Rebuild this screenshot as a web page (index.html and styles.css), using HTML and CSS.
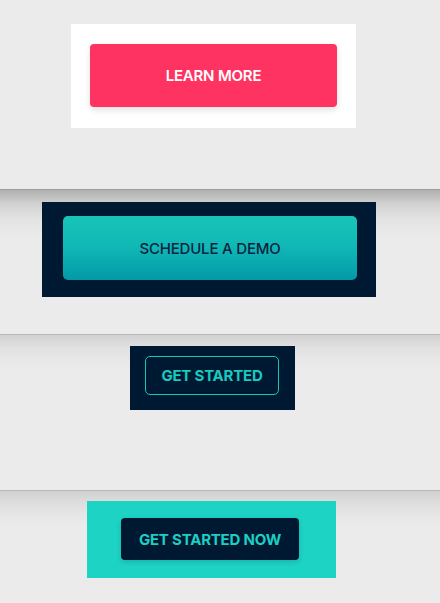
FILE: index.html
```html
<!DOCTYPE html>
<html>
<head>
<meta charset="utf-8">
<link rel="stylesheet" href="styles.css">
</head>
<body>
<section class="sec sec1">
  <div class="box box1"><a class="btn btn-learn">LEARN MORE</a></div>
</section>
<section class="sec sec2">
  <div class="box box2"><a class="btn btn-demo">SCHEDULE A DEMO</a></div>
</section>
<section class="sec sec3">
  <div class="box box3"><a class="btn btn-start">GET STARTED</a></div>
</section>
<section class="sec sec4">
  <div class="box box4"><a class="btn btn-now">GET STARTED NOW</a></div>
</section>
</body>
</html>
```
FILE: styles.css
```css
html, body { margin: 0; padding: 0; }
body {
  background: #ebebeb;
  font-family: "Inter", "Noto Sans", sans-serif;
  width: 440px;
  height: 603px;
  overflow: hidden;
}
.sec {
  display: flex;
  flex-direction: column;
  align-items: flex-start;
  box-sizing: border-box;
}
.sec1 { height: 189px; padding-top: 24px; background: #ebebeb; }
.sec2 {
  height: 145px;
  padding-top: 12px;
  border-top: 1px solid #9e9e9e;
  background: linear-gradient(to bottom, #b0b0b0 0px, #d2d2d2 14px, #e4e4e4 30px, #ebebeb 48px, #ebebeb 100%);
}
.sec3 {
  height: 156px;
  padding-top: 11px;
  border-top: 1px solid #b8b8b8;
  background: linear-gradient(to bottom, #d2d2d2 0px, #e2e2e2 14px, #ebebeb 34px, #ebebeb 100%);
}
.sec4 {
  height: 113px;
  padding-top: 10px;
  border-top: 1px solid #b8b8b8;
  background: linear-gradient(to bottom, #d0d0d0 0px, #e0e0e0 14px, #ebebeb 34px, #ebebeb 100%);
}
.box { display: flex; box-sizing: border-box; }
.box1 { margin-left: 71px; width: 285px; height: 104px; padding: 20px 19px 0; background: #fff; }
.box2 { margin-left: 42px; width: 334px; height: 95px; padding: 14px 19px 0 21px; background: #001933; }
.box3 { margin-left: 130px; width: 165px; height: 64px; padding: 10px 16px 0 15px; background: #001933; }
.box4 { margin-left: 87px; width: 249px; height: 77px; padding: 17px 37px 0 34px; background: #1dd3c4; }
.btn {
  display: flex;
  align-items: center;
  justify-content: center;
  box-sizing: border-box;
  border-radius: 4px;
  font-size: 15px;
  text-decoration: none;
  letter-spacing: -0.2px;
}
.btn-learn {
  width: 247px; height: 63px;
  background: #ff3362;
  color: #fff;
  font-weight: 600;
  box-shadow: 0 3px 6px rgba(0,0,0,0.12);
}
.btn-demo {
  width: 295px; height: 64px;
  background: linear-gradient(to bottom, #18c4b7 0%, #11b9b6 45%, #0399a8 100%);
  color: #0a2440;
  font-weight: 500;
  border-radius: 5px;
}
.btn-start {
  width: 134px; height: 39px;
  border: 1px solid #13c7bb;
  color: #17cbbf;
  font-weight: 700;
  border-radius: 5px;
}
.btn-now {
  width: 178px; height: 42px;
  background: #001933;
  color: #1dcfc2;
  font-weight: 700;
  box-shadow: 0 2px 5px rgba(0,0,0,0.15);
}
```
